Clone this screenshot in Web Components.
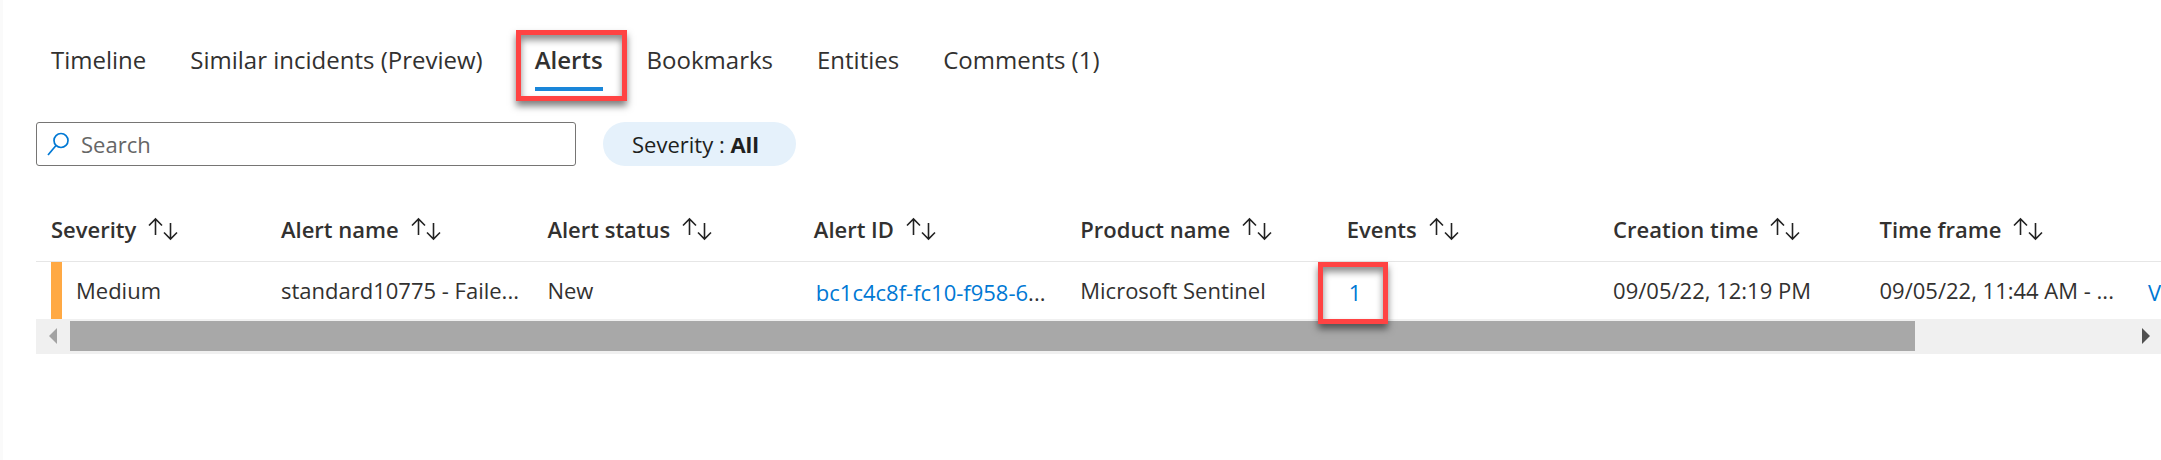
<!DOCTYPE html>
<html lang="en">
<head>
<meta charset="utf-8">
<title>Incident alerts</title>
<style>
  body { margin: 0; background: #fff; color: #323130; font-family: "Open Sans", "Noto Sans", sans-serif; font-size: 22px; }
</style>
</head>
<body>
<incident-alerts></incident-alerts>
<script>
const define = (name, html, setup) => {
  const template = document.createElement("template");
  template.innerHTML = html;
  customElements.define(name, class extends HTMLElement {
    constructor() {
      super();
      this.attachShadow({ mode: "open" }).append(template.content.cloneNode(true));
    }
    connectedCallback() { if (setup) setup(this, this.shadowRoot); }
  });
};

define("call-out", `
  <style>
    :host { position: absolute; box-sizing: border-box; border: 5px solid #ff4343; pointer-events: none; z-index: 2;
      box-shadow: 0 5px 7px rgba(0,0,0,.5), inset 0 5px 7px rgba(0,0,0,.45); }
  </style>`);

define("sort-icon", `
  <style>:host { display: block; width: 30px; height: 24px; } svg { display: block; }</style>
  <svg width="30" height="24" viewBox="0 0 30 24" fill="none" stroke="#222" stroke-width="1.6" aria-hidden="true">
    <path d="M7.5 18V2M1 8.5L7.5 2L14 8.5M22.5 6V22M16 15.5L22.5 22L29 15.5"/>
  </svg>`);

define("tab-item", `
  <style>
    :host { display: block; position: relative; }
    :host([selected]) { margin-left: 8px; }
    button { display: block; box-sizing: border-box; height: 51px; padding: 0 0 7px; border: 0; border-bottom: 4px solid transparent;
      background: none; color: inherit; font: inherit; font-size: 24px; line-height: 40px; white-space: nowrap; }
    :host([selected]) button { font-weight: 600; border-bottom-color: #1a86d9; }
  </style>
  <button type="button" role="tab"><slot></slot></button>
  <slot name="mark"></slot>`, (host, root) => {
    root.querySelector("button").setAttribute("aria-selected", host.hasAttribute("selected"));
  });

define("tab-strip", `
  <style>
    :host { display: block; }
    nav { display: flex; gap: 44px; padding: 40px 0 0 51px; }
    call-out { top: -10px; bottom: -10px; left: -19px; right: -24px; }
  </style>
  <nav role="tablist">
    <tab-item>Timeline</tab-item>
    <tab-item>Similar incidents (Preview)</tab-item>
    <tab-item selected>Alerts<call-out slot="mark"></call-out></tab-item>
    <tab-item>Bookmarks</tab-item>
    <tab-item>Entities</tab-item>
    <tab-item>Comments (1)</tab-item>
  </nav>`);

define("search-box", `
  <style>
    :host { display: block; flex: 0 1 540px; }
    label { display: flex; align-items: center; gap: 12px; box-sizing: border-box; height: 44px; padding: 0 10px; border: 1px solid #767574; border-radius: 3px; }
    svg { flex: none; }
    input { flex: 1; min-width: 0; padding: 0; border: 0; outline: 0; background: none; color: inherit; font: inherit; }
    input::placeholder { color: #666; opacity: 1; }
  </style>
  <label>
    <svg width="22" height="24" viewBox="0 0 22 24" fill="none" stroke="#0078d4" stroke-width="1.7" aria-hidden="true">
      <circle cx="14" cy="8.5" r="7"/><path d="M9 13.5L1 23"/>
    </svg>
    <input type="search" placeholder="Search" aria-label="Search">
  </label>`);

define("filter-pill", `
  <style>
    :host { display: block; }
    button { display: block; height: 44px; padding: 0 37px 0 29px; border: 0; border-radius: 22px; background: #e5f1fb; color: #201f1e; font: inherit; white-space: nowrap; }
    ::slotted(b) { font-weight: 700; }
  </style>
  <button type="button"><slot></slot></button>`);

define("filter-bar", `
  <style>
    :host { display: flex; gap: 27px; padding: 31px 0 0 36px; }
  </style>
  <search-box></search-box>
  <filter-pill>Severity : <b>All</b></filter-pill>`);

define("alert-table", `
  <style>
    :host { display: block; margin-left: 36px; }
    table { width: 100%; table-layout: fixed; border-collapse: collapse; }
    .first { width: 230px; } .last { width: 30px; }
    th, td { box-sizing: border-box; padding: 0 0 0 15px; text-align: left; white-space: nowrap; }
    th { height: 64px; border-bottom: 1px solid #e6e6e6; font-weight: 600; }
    th button { display: flex; align-items: center; gap: 12px; padding: 0; border: 0; background: none; color: inherit; font: inherit; }
    td { height: 57px; position: relative; }
    .level div { display: flex; align-items: center; height: 57px; padding-left: 14px; border-left: 11px solid #ffa944; }
    a { color: #0078d4; text-decoration: none; }
    .link { padding: 4px 0 0 17px; }
    .end { overflow: hidden; }
    call-out { left: -14px; top: 0; width: 70px; height: 62px; }
  </style>
  <table>
    <colgroup><col class="first"><col span="7"><col class="last"></colgroup>
    <thead><tr>
      <th scope="col"><button type="button">Severity<sort-icon></sort-icon></button></th>
      <th scope="col"><button type="button">Alert name<sort-icon></sort-icon></button></th>
      <th scope="col"><button type="button">Alert status<sort-icon></sort-icon></button></th>
      <th scope="col"><button type="button">Alert ID<sort-icon></sort-icon></button></th>
      <th scope="col"><button type="button">Product name<sort-icon></sort-icon></button></th>
      <th scope="col"><button type="button">Events<sort-icon></sort-icon></button></th>
      <th scope="col"><button type="button">Creation time<sort-icon></sort-icon></button></th>
      <th scope="col"><button type="button">Time frame<sort-icon></sort-icon></button></th>
      <th></th>
    </tr></thead>
    <tbody><tr>
      <td class="level"><div>Medium</div></td>
      <td>standard10775 - Faile...</td>
      <td>New</td>
      <td class="link"><a href="#alert">bc1c4c8f-fc10-f958-6</a>...</td>
      <td>Microsoft Sentinel</td>
      <td class="link"><a href="#events">1</a><call-out></call-out></td>
      <td>09/05/22, 12:19 PM</td>
      <td>09/05/22, 11:44 AM - ...</td>
      <td class="link end"><a href="#view">V</a></td>
    </tr></tbody>
  </table>`);

define("scroll-strip", `
  <style>
    :host { display: flex; align-items: center; height: 35px; margin-left: 36px; background: #f0f0f0; }
    button { display: flex; justify-content: center; align-items: center; width: 34px; height: 35px; padding: 0; border: 0; background: none; color: #a3a3a3; }
    button:last-child { color: #505050; }
    div { flex: 1; height: 30px; }
    i { display: block; width: 89.7%; height: 100%; background: #a8a8a8; }
  </style>
  <button type="button" aria-label="Scroll left"><svg width="24" height="16"><path d="M16 0V16L8 8Z" fill="currentColor"/></svg></button>
  <div><i></i></div>
  <button type="button" aria-label="Scroll right"><svg width="24" height="16"><path d="M10 0V16L18 8Z" fill="currentColor"/></svg></button>`);

define("incident-alerts", `
  <style>
    :host { display: block; box-sizing: border-box; min-height: 100vh; border-left: 3px solid #fafafa; overflow: hidden; }
    main { margin-left: -3px; }
    alert-table { margin-top: 31px; }
  </style>
  <main>
    <tab-strip></tab-strip>
    <filter-bar></filter-bar>
    <alert-table></alert-table>
    <scroll-strip></scroll-strip>
  </main>`);
</script>
</body>
</html>
